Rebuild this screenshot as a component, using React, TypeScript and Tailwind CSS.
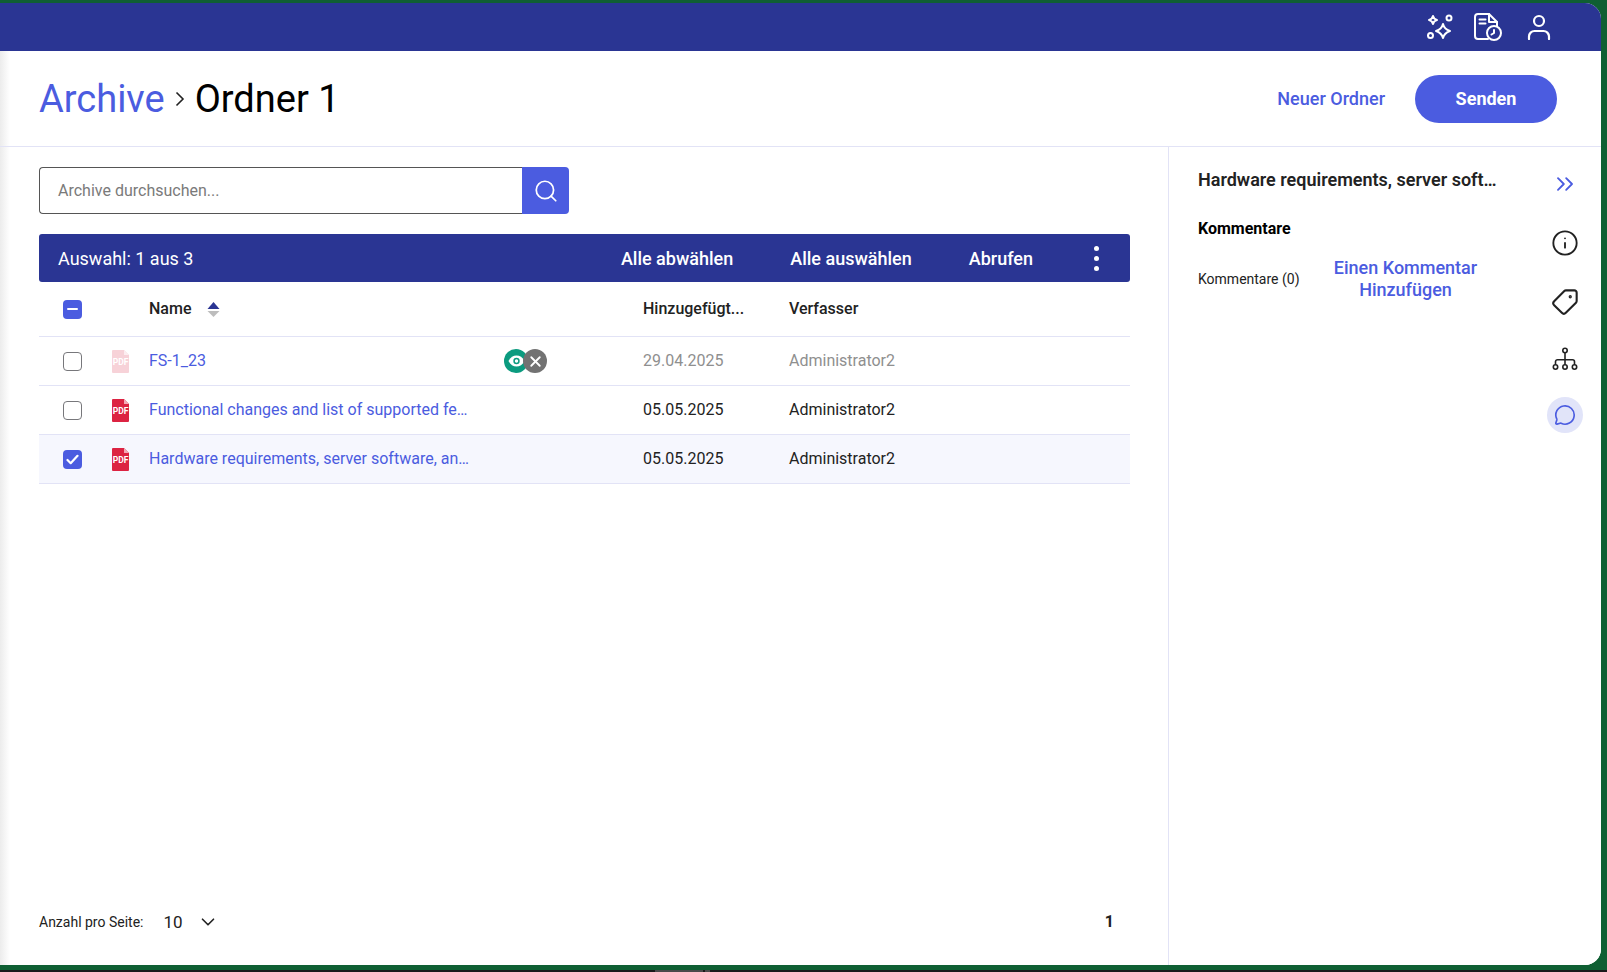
import { ChevronDown, ChevronsRight, Info, MessageCircle, Search, Tag, X } from 'lucide-react'

type Row = { name: string; date: string; author: string; checked?: boolean; pending?: boolean }

const rows: Row[] = [
  { name: 'FS-1_23', date: '29.04.2025', author: 'Administrator2', pending: true },
  { name: 'Functional changes and list of supported features', date: '05.05.2025', author: 'Administrator2' },
  { name: 'Hardware requirements, server software, and clients', date: '05.05.2025', author: 'Administrator2', checked: true },
]

function Sparkles() {
  return (
    <svg width="28" height="27" viewBox="0 0 28 27" fill="none" stroke="white" strokeWidth="2" strokeLinejoin="round">
      <path d="M7 2c.6 2.6 1.4 3.4 4 4-2.600.6-3.400 1.400-4 4-.6-2.600-1.400-3.400-4-4 2.600-.6 3.400-1.400 4-4Z" />
      <path d="M17 10c1 4 2.600 5.600 7 7-4.400 1.400-6 3-7 7-1-4-2.600-5.600-7-7 4.400-1.400 6-3 7-7Z" />
      <circle cx="23" cy="4" r="2.500" />
      <circle cx="4.500" cy="21.500" r="2.500" />
    </svg>
  )
}

function DocClock() {
  return (
    <svg width="29" height="28" viewBox="0 0 29 28" fill="none" stroke="white" strokeWidth="2" strokeLinecap="round" strokeLinejoin="round">
      <path d="M14 26H4a3 3 0 0 1-3-3V4a3 3 0 0 1 3-3h11l8 8v4" />
      <path d="M15 1v8h8" />
      <path d="M5.500 6.500h6M5.500 10.500h6" />
      <circle cx="20" cy="20" r="7" />
      <path d="M20 20v-3M20 20l-2.500 1.500" />
    </svg>
  )
}

function User() {
  return (
    <svg width="24" height="26" viewBox="0 0 24 26" fill="none" stroke="white" strokeWidth="2.200" strokeLinecap="round">
      <circle cx="12" cy="7" r="5" />
      <path d="M2 25v-2.500c0-3 2.500-5.500 5.500-5.500h9c3 0 5.500 2.500 5.500 5.500V25" />
    </svg>
  )
}

function OrgChart() {
  return (
    <svg width="26" height="24" viewBox="0 0 26 24" fill="none" stroke="#222" strokeWidth="1.600">
      <circle cx="13" cy="3.500" r="2.200" />
      <path d="M13 5.700v12M3.500 17.700v-3a2 2 0 0 1 2-2h15a2 2 0 0 1 2 2v3" />
      <circle cx="3.500" cy="20" r="2.200" />
      <circle cx="13" cy="20" r="2.200" />
      <circle cx="22.500" cy="20" r="2.200" />
    </svg>
  )
}

function PdfIcon({ faded }: { faded?: boolean }) {
  return (
    <div className={faded ? 'relative h-[23px] w-[17px] opacity-20' : 'relative h-[23px] w-[17px]'}>
      <svg width="17" height="23" viewBox="0 0 17 23">
        <path d="M1 0h11l5 5v17a1 1 0 0 1-1 1H1a1 1 0 0 1-1-1V1a1 1 0 0 1 1-1Z" fill="#dc2342" />
        <path d="M12 0l5 5h-5Z" fill="#f3a9b6" />
      </svg>
      <span className="absolute inset-x-0 top-[7px] text-center text-[8.500px] leading-[10px] font-bold text-white">PDF</span>
    </div>
  )
}

function Checkbox({ state }: { state?: 'checked' | 'mixed' }) {
  if (!state) return <div className="h-[19px] w-[19px] shrink-0 rounded-[4px] border border-[#77777b] bg-white" />
  return (
    <div className="flex h-[19px] w-[19px] shrink-0 items-center justify-center rounded-[4px] bg-[#4b5ce0]">
      {state === 'mixed' ? (
        <div className="h-[2.500px] w-[11px] rounded-full bg-white" />
      ) : (
        <svg width="13" height="11" viewBox="0 0 13 11" fill="none" stroke="white" strokeWidth="2.200" strokeLinecap="round" strokeLinejoin="round">
          <path d="M1.500 6l3.200 3.200L11.500 1.800" />
        </svg>
      )}
    </div>
  )
}

function PendingBadges() {
  return (
    <div className="flex">
      <div className="flex h-[24px] w-[24px] items-center justify-center rounded-full bg-[#0b9b7f]">
        <svg width="17" height="12" viewBox="0 0 17 12">
          <path d="M0.500 6C2.500 2.300 5.200.500 8.500.500S14.500 2.300 16.500 6c-2 3.700-4.700 5.500-8 5.500S2.500 9.700.500 6Z" fill="white" />
          <circle cx="8.500" cy="6" r="3.200" fill="#0b9b7f" />
          <circle cx="8.500" cy="6" r="1.700" fill="white" />
        </svg>
      </div>
      <div className="-ml-[5px] flex h-[24px] w-[24px] items-center justify-center rounded-full bg-[#727272]">
        <X size={17} color="white" strokeWidth={2.600} />
      </div>
    </div>
  )
}

export default function App() {
  return (
    <div className="flex h-[972px] w-full flex-col overflow-hidden bg-[#0f5f33] pt-[3px] font-['Roboto',sans-serif] text-[#222]">
      <div className="flex flex-1 pr-[6px]">
        <div className="flex flex-1 flex-col overflow-hidden rounded-tr-[16px] rounded-br-[16px] bg-white">
          <div className="flex h-[48px] shrink-0 items-center justify-end gap-[20px] bg-[#2a3593] pr-[50px]">
            <Sparkles />
            <DocClock />
            <div className="ml-[4px]">
              <User />
            </div>
          </div>

          <div className="flex flex-1 flex-col bg-gradient-to-r from-[#ececec] via-white via-[10px] to-white">
            <div className="flex h-[96px] shrink-0 items-center justify-between border-b border-[#e2e3f6] pr-[44px] pl-[39px]">
              <div className="flex items-center">
                <span className="text-[38px] leading-[46px] text-[#4b5ce0]">Archive</span>
                <svg className="mx-[10px]" width="10" height="16" viewBox="0 0 10 16" fill="none" stroke="#222" strokeWidth="1.600">
                  <path d="M1.500 1.500L8 8l-6.500 6.500" />
                </svg>
                <span className="text-[38px] leading-[46px] text-black">Ordner 1</span>
              </div>
              <div className="flex items-center gap-[30px]">
                <span className="text-[18px] font-medium text-[#4b5ce0]">Neuer Ordner</span>
                <div className="flex h-[48px] w-[142px] items-center justify-center rounded-full bg-[#4b5ce0] text-[18px] font-bold text-white">
                  Senden
                </div>
              </div>
            </div>

            <div className="flex flex-1">
              <div className="flex w-[1168px] shrink-0 flex-col pt-[20px] pr-[38px] pl-[39px]">
                <div className="flex h-[47px] w-[530px]">
                  <div className="flex flex-1 items-center rounded-l-[4px] border border-r-0 border-[#555] bg-white pl-[18px] text-[16px] text-[#7a7a7a]">
                    Archive durchsuchen...
                  </div>
                  <div className="flex w-[47px] items-center justify-center rounded-r-[4px] bg-[#4b5ce0]">
                    <Search size={26} color="white" strokeWidth={1.600} />
                  </div>
                </div>

                <div className="mt-[20px] flex h-[48px] items-center rounded-[3px] bg-[#2a3593] pl-[19px] text-[18px] text-white">
                  <span className="flex-1">Auswahl: 1 aus 3</span>
                  <span className="font-medium">Alle abwählen</span>
                  <span className="ml-[57px] font-medium">Alle auswählen</span>
                  <span className="ml-[57px] font-medium">Abrufen</span>
                  <div className="mr-[31px] ml-[61px] flex flex-col gap-[5px]">
                    <div className="h-[5px] w-[5px] rounded-full bg-white" />
                    <div className="h-[5px] w-[5px] rounded-full bg-white" />
                    <div className="h-[5px] w-[5px] rounded-full bg-white" />
                  </div>
                </div>

                <div className="flex h-[55px] items-center border-b border-[#e2e3f6] pl-[24px] text-[16px] font-medium">
                  <Checkbox state="mixed" />
                  <span className="ml-[67px] w-[58px]">Name</span>
                  <svg width="13" height="17" viewBox="0 0 13 17">
                    <path d="M6.500 1L12.500 8H.500Z" fill="#2a3593" />
                    <path d="M6.500 16L12.500 10H.500Z" fill="#bdbdbd" />
                  </svg>
                  <span className="ml-[423px] w-[146px]">Hinzugefügt...</span>
                  <span>Verfasser</span>
                </div>

                {rows.map((row) => (
                  <div
                    key={row.name}
                    className={`flex h-[49px] items-center border-b border-[#e2e3f6] pl-[24px] text-[16px] first-of-type:h-[53px] last:border-b-0 ${row.checked ? 'bg-[#f6f7fe]' : ''}`}
                  >
                    <Checkbox state={row.checked ? 'checked' : undefined} />
                    <div className="ml-[30px]">
                      <PdfIcon faded={row.pending} />
                    </div>
                    <div className="ml-[20px] w-[355px]">
                      <div className="w-[320px] truncate text-[#4b5ce0]">{row.name}</div>
                    </div>
                    <div className="w-[139px]">{row.pending ? <PendingBadges /> : null}</div>
                    <span className={`w-[146px] ${row.pending ? 'text-[#8f8f8f]' : ''}`}>{row.date}</span>
                    <span className={row.pending ? 'text-[#8f8f8f]' : ''}>{row.author}</span>
                  </div>
                ))}

                <div className="mt-auto mb-[30px] flex items-center pr-[16px]">
                  <span className="text-[14px]">Anzahl pro Seite:</span>
                  <span className="ml-[20px] text-[17px]">10</span>
                  <ChevronDown className="ml-[14px]" size={22} strokeWidth={1.800} />
                  <span className="ml-auto text-[16px] font-bold">1</span>
                </div>
              </div>

              <div className="flex flex-1 border-l border-[#e2e3f6]">
                <div className="flex-1 pt-[19px] pl-[29px]">
                  <div className="w-[306px] truncate text-[18px] leading-[28px] font-semibold">Hardware requirements, server software</div>
                  <div className="mt-[25px] text-[16px] leading-[20px] font-bold text-black">Kommentare</div>
                  <div className="mt-[18px] flex items-center">
                    <span className="w-[120px] text-[14px]">Kommentare (0)</span>
                    <span className="w-[175px] text-center text-[18px] leading-[22px] font-medium text-[#4b5ce0]">
                      Einen Kommentar Hinzufügen
                    </span>
                  </div>
                </div>
                <div className="flex w-[72px] shrink-0 flex-col items-center gap-[31px] pt-[23px]">
                  <ChevronsRight size={28} color="#4b5ce0" strokeWidth={1.600} />
                  <Info size={28} strokeWidth={1.600} color="#222" />
                  <Tag size={28} strokeWidth={1.800} color="#222" className="-scale-x-100" />
                  <OrgChart />
                  <div className="-mt-[5px] flex h-[36px] w-[36px] items-center justify-center rounded-full bg-[#e1e4f9]">
                    <MessageCircle size={22} color="#4b5ce0" strokeWidth={1.800} />
                  </div>
                </div>
              </div>
            </div>
          </div>
        </div>
      </div>
      <div className="mt-[5px] flex h-[2px] shrink-0 bg-[#1a1a1a] pl-[655px]">
        <div className="h-full w-[48px] bg-[#4a4a4a]" />
        <div className="ml-[2px] h-full w-[5px] bg-[#4a4a4a]" />
      </div>
    </div>
  )
}
